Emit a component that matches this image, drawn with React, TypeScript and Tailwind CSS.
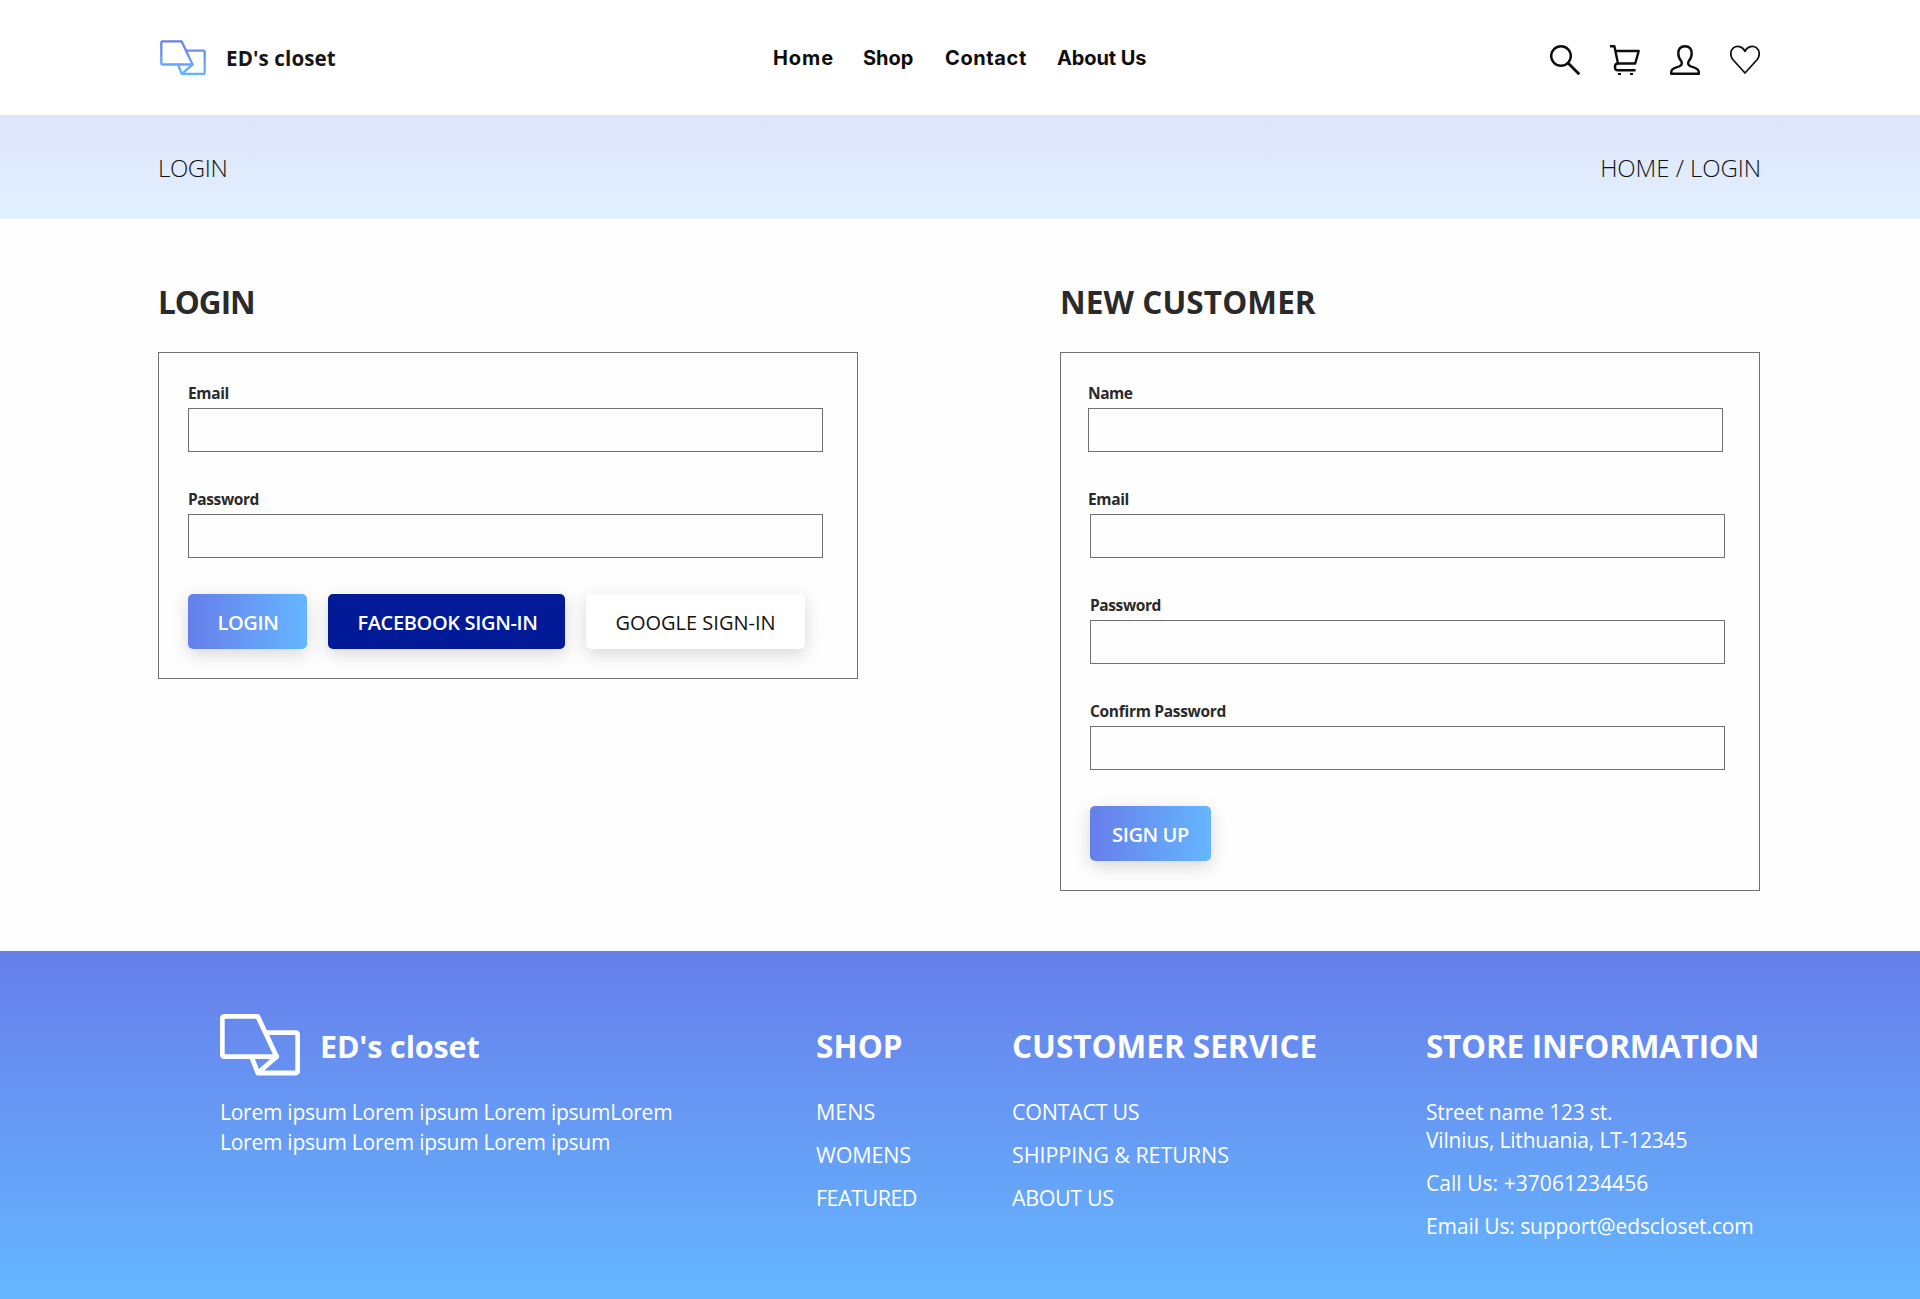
import type { ReactNode } from "react";

function LogoMark({ className, gradient, stroke }: { className: string; gradient?: boolean; stroke: number }) {
  return (
    <svg className={className} viewBox="0 0 80 61.5" fill="none" stroke={gradient ? "url(#mark)" : "#fff"} strokeWidth={stroke} strokeLinejoin="round" strokeLinecap="round">
      {gradient && (
        <defs>
          <linearGradient id="mark" gradientUnits="userSpaceOnUse" x1="0" y1="0" x2="0" y2="61">
            <stop offset="0" stopColor="#667eea" />
            <stop offset="1" stopColor="#64b6ff" />
          </linearGradient>
        </defs>
      )}
      <path d="M4.3 2.4H37.7L56.6 42.6H4.3A2 2 0 0 1 2.3 40.6V4.4A2 2 0 0 1 4.3 2.4Z" />
      <path d="M46.5 18.6H75.7A2 2 0 0 1 77.7 20.6V57A2 2 0 0 1 75.7 59H37.8L31.8 43.5M56.6 42.8L37.8 59" />
    </svg>
  );
}

function SearchIcon() {
  return (
    <svg className="h-[30px] w-[30px]" viewBox="0 0 30 30" fill="none" stroke="#0d0d0d">
      <circle cx="11" cy="11" r="9.8" strokeWidth="2.4" />
      <path d="M18 17.9L29.3 29.3" strokeWidth="2.8" />
    </svg>
  );
}

function CartIcon() {
  return (
    <svg className="h-[30px] w-[30px]" viewBox="0 0 30 30" fill="none" stroke="#0d0d0d" strokeWidth="2.4" strokeLinejoin="round">
      <path d="M0 1.3H4.4L8 18.5" />
      <path d="M5.4 6H28.7L25.2 18.5H8C3.9 18.5 3.9 25.3 8 25.3H25.6" />
      <path d="M8 29H11M20 29H23" strokeWidth="2" />
    </svg>
  );
}

function UserIcon() {
  return (
    <svg className="h-[30px] w-[30px]" viewBox="0 0 30 30" fill="none" stroke="#0d0d0d" strokeWidth="2.4" strokeLinejoin="round">
      <path d="M15 1.2C10.6 1.2 8.3 4 8.3 8.5C8.3 12 9.6 14.4 11.6 16.8C12.3 19 11.6 20.4 9 21.5C5 23 1.2 23.6 1.2 27V28.8H28.8V27C28.8 23.6 25 23 21 21.5C18.4 20.4 17.7 19 18.4 16.8C20.4 14.4 21.7 12 21.7 8.5C21.7 4 19.4 1.2 15 1.2Z" />
    </svg>
  );
}

function HeartIcon() {
  return (
    <svg className="h-[30px] w-[30px]" viewBox="0 0 30 30" fill="none" stroke="#0d0d0d" strokeWidth="1.7" strokeLinejoin="round">
      <path d="M15 28L3 14.7C-.2 10.9 .2 5.5 3.4 2.8C7 -.1 12.5 1.3 15 6.3C17.5 1.3 23 -.1 26.6 2.8C29.8 5.5 30.2 10.9 27 14.7Z" />
    </svg>
  );
}

function Field({ label, labelClass, inputClass = "" }: { label: string; labelClass: string; inputClass?: string }) {
  return (
    <label className="block">
      <span className={`mb-[5px] block text-[15.5px] leading-5 font-bold text-[#2a2a2a] ${labelClass}`}>{label}</span>
      <input className={`block h-11 w-[635px] border border-[#707070] bg-transparent px-3 outline-none ${inputClass}`} />
    </label>
  );
}

function Button({ className, children }: { className: string; children: ReactNode }) {
  return (
    <button className={`flex h-[55px] items-center justify-center rounded-[5px] pt-0.5 text-[20px] leading-7 shadow-[0_5px_18px_rgba(0,0,0,0.16)] ${className}`}>
      {children}
    </button>
  );
}

export default function App() {
  return (
    <div className="flex h-[1299px] w-[1920px] flex-col overflow-hidden bg-[#fefefe] font-['Open_Sans',sans-serif]">
      <header className="flex h-[115px] items-center justify-between bg-white px-40">
        <div className="flex w-[613px] items-center">
          <LogoMark className="h-[35.4px] w-[46px]" gradient stroke={4} />
          <span className="ml-5 pt-0.5 text-[20.6px] leading-7 font-bold tracking-[0.1px] text-[#161616]">ED's closet</span>
        </div>
        <nav className="flex flex-1 pt-px font-['Inter',sans-serif] text-[20px] leading-7 font-bold text-[#0d0d0d]">
          <a className="w-[90px] tracking-[0.9px]">Home</a>
          <a className="w-[82px]">Shop</a>
          <a className="w-[112px] tracking-[0.6px]">Contact</a>
          <a className="tracking-[-0.1px]">About Us</a>
        </nav>
        <div className="flex gap-[30px] pt-[5px]">
          <SearchIcon />
          <CartIcon />
          <UserIcon />
          <HeartIcon />
        </div>
      </header>

      <section className="flex h-[104px] items-center justify-between bg-linear-to-b from-[#e0e5fb] to-[#e0f0ff] pt-0.5 pr-[159px] pl-[158px] text-[24px] leading-8 font-light text-[#111]">
        <span className="tracking-[-0.4px]">LOGIN</span>
        <span className="tracking-[-0.06px]">HOME / LOGIN</span>
      </section>

      <main className="flex flex-1 items-start justify-between pt-[63px] pr-40 pl-[158px] text-[#2a2a2a]">
        <section>
          <h2 className="mb-[30px] text-[31.5px] leading-10 font-bold tracking-[-1px]">LOGIN</h2>
          <form className="h-[327px] w-[700px] border border-[#707070] px-[29px] pt-[30px]">
            <div className="flex flex-col gap-[37px]">
              <Field label="Email" labelClass="tracking-[-0.35px]" />
              <Field label="Password" labelClass="tracking-[-0.4px]" />
            </div>
            <div className="mt-9 flex gap-[21px]">
              <Button className="w-[119px] bg-linear-to-r from-[#667eea] to-[#64b6ff] pl-px font-semibold tracking-[-0.4px] text-white">LOGIN</Button>
              <Button className="w-[237px] bg-[#001a98] pl-0.5 font-semibold tracking-[-0.35px] text-white">FACEBOOK SIGN-IN</Button>
              <Button className="w-[219px] bg-white text-[#111]">GOOGLE SIGN-IN</Button>
            </div>
          </form>
        </section>

        <section>
          <h2 className="mb-[30px] text-[31.5px] leading-10 font-bold tracking-[0.1px]">NEW CUSTOMER</h2>
          <form className="h-[539px] w-[700px] border border-[#707070] pt-[30px] pl-[27px]">
            <div className="flex flex-col gap-[37px]">
              <Field label="Name" labelClass="tracking-[-0.45px]" />
              <Field label="Email" labelClass="tracking-[-0.35px]" inputClass="ml-0.5" />
              <Field label="Password" labelClass="ml-0.5 tracking-[-0.4px]" inputClass="ml-0.5" />
              <Field label="Confirm Password" labelClass="ml-0.5 tracking-[-0.3px]" inputClass="ml-0.5" />
            </div>
            <Button className="mt-9 ml-0.5 w-[121px] bg-linear-to-r from-[#667eea] to-[#64b6ff] font-semibold tracking-[-0.4px] text-white">SIGN UP</Button>
          </form>
        </section>
      </main>

      <footer className="grid h-[348px] grid-cols-[596px_196px_414px_auto] bg-linear-to-b from-[#667eea] to-[#64b6ff] pt-[63px] pl-[220px] text-[#fefefe]">
        <div>
          <div className="flex items-center">
            <LogoMark className="h-[61.5px] w-20" stroke={4.8} />
            <span className="ml-5 pt-[3px] text-[30.5px] leading-10 font-bold tracking-[-0.15px]">ED's closet</span>
          </div>
          <p className="mt-[21px] text-[21px] leading-[30px] tracking-[-0.25px]">
            Lorem ipsum Lorem ipsum Lorem ipsumLorem
            <br />
            Lorem ipsum Lorem ipsum Lorem ipsum
          </p>
        </div>
        <div className="pt-3 text-[21.5px] leading-7">
          <h3 className="mb-8 text-[31.5px] leading-10 font-bold tracking-[0.1px]">SHOP</h3>
          <ul className="flex flex-col gap-[15px]">
            <li>MENS</li>
            <li className="tracking-[-0.15px]">WOMENS</li>
            <li className="tracking-[-0.5px]">FEATURED</li>
          </ul>
        </div>
        <div className="pt-3 text-[21.5px] leading-7">
          <h3 className="mb-8 text-[31.5px] leading-10 font-bold">CUSTOMER SERVICE</h3>
          <ul className="flex flex-col gap-[15px]">
            <li className="tracking-[-0.3px]">CONTACT US</li>
            <li className="tracking-[-0.07px]">SHIPPING &amp; RETURNS</li>
            <li className="tracking-[-0.38px]">ABOUT US</li>
          </ul>
        </div>
        <div className="pt-3 text-[21px] leading-7">
          <h3 className="mb-8 text-[31.5px] leading-10 font-bold tracking-[-0.25px]">STORE INFORMATION</h3>
          <ul className="flex flex-col gap-[15px]">
            <li className="tracking-[-0.18px]">
              Street name 123 st.
              <br />
              Vilnius, Lithuania, LT-12345
            </li>
            <li className="tracking-[0.05px]">Call Us: +37061234456</li>
            <li className="tracking-[-0.1px]">Email Us: support@edscloset.com</li>
          </ul>
        </div>
      </footer>
    </div>
  );
}
